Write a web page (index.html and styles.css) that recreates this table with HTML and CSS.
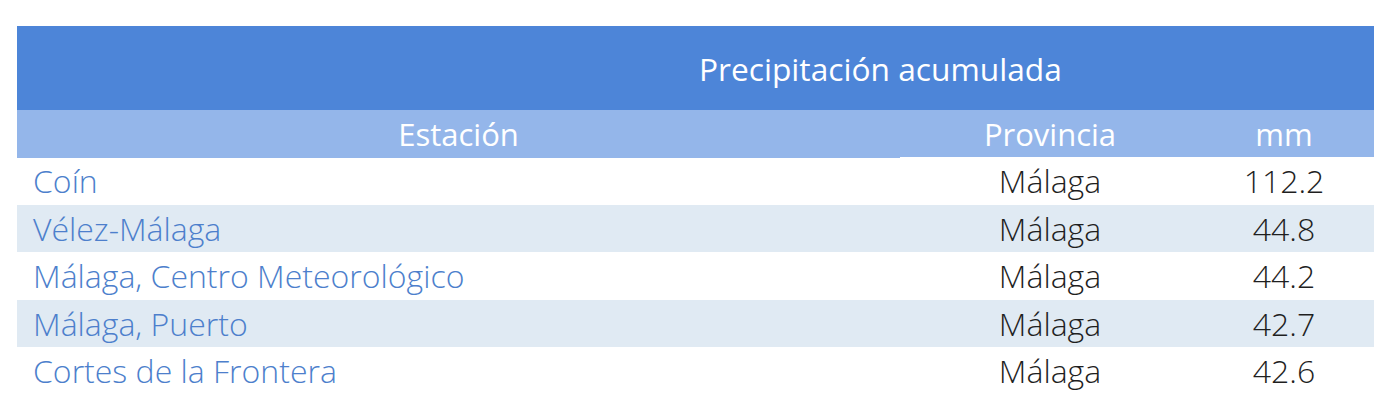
FILE: index.html
```html
<!DOCTYPE html>
<html lang="es">
<head>
<meta charset="utf-8">
<title>Precipitación acumulada</title>
<link rel="stylesheet" href="styles.css">
</head>
<body>
<div class="table">
  <div class="title">Precipitación acumulada</div>
  <div class="row head">
    <div class="c1">Estación</div>
    <div class="c2">Provincia</div>
    <div class="c3">mm</div>
  </div>
  <div class="row">
    <div class="c1 name">Coín</div>
    <div class="c2">Málaga</div>
    <div class="c3">112.2</div>
  </div>
  <div class="row alt">
    <div class="c1 name">Vélez-Málaga</div>
    <div class="c2">Málaga</div>
    <div class="c3">44.8</div>
  </div>
  <div class="row">
    <div class="c1 name">Málaga, Centro Meteorológico</div>
    <div class="c2">Málaga</div>
    <div class="c3">44.2</div>
  </div>
  <div class="row alt">
    <div class="c1 name">Málaga, Puerto</div>
    <div class="c2">Málaga</div>
    <div class="c3">42.7</div>
  </div>
  <div class="row">
    <div class="c1 name">Cortes de la Frontera</div>
    <div class="c2">Málaga</div>
    <div class="c3">42.6</div>
  </div>
</div>
</body>
</html>
```
FILE: styles.css
```css
html, body {
  margin: 0;
  background: #ffffff;
}
body {
  padding: 26px 0 0 17px;
  font-family: "Open Sans", "DejaVu Sans", sans-serif;
}
.table {
  width: 1357px;
}
.title {
  height: 84px;
  background: #4d85d8;
  color: #ffffff;
  font-size: 31.7px;
  font-weight: 400;
  display: flex;
  align-items: center;
  padding-left: 682px;
  box-sizing: border-box;
}
.row {
  display: grid;
  grid-template-columns: 883px 300px 174px;
  height: 47.5px;
  align-items: center;
  font-size: 32px;
  font-weight: 300;
  color: #1f1f1f;
}
.row > div {
  text-align: center;
}
.row > .c3 {
  padding-right: 6px;
}
.row > .name {
  text-align: left;
  padding-left: 16px;
  color: #4d7fcc;
}
.head {
  height: 47px;
  background: #94b6ea;
  color: #ffffff;
  font-weight: 400;
  font-size: 31px;
}
.head > .c1 {
  align-self: stretch;
  display: flex;
  align-items: center;
  justify-content: center;
  box-shadow: 0 1px 0 #94b6ea;
}
.alt {
  background: #e0eaf3;
}
```
